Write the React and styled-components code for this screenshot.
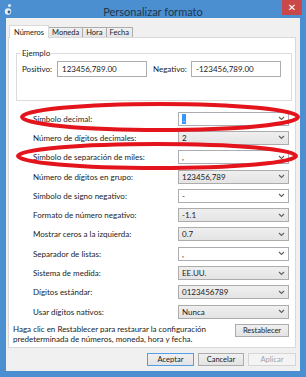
import React from 'react';
import styled, { createGlobalStyle } from 'styled-components';

const GlobalStyle = createGlobalStyle`
  body {
    margin: 0;
    font-family: Lato, "Noto Sans", sans-serif;
    font-size: 8px;
    color: #1b1b1b;
  }
`;

const Window = styled.div`
  position: relative;
  width: 306px;
  height: 377px;
  box-sizing: border-box;
  padding: 0 6px 6px;
  background: #4b8fd0;
  display: flex;
  flex-direction: column;
`;

const TitleBar = styled.div`
  height: 18px;
  margin: 0 -6px;
  padding: 0 4px;
  display: grid;
  grid-template-columns: 1fr auto 1fr;
  align-items: center;
`;

const Title = styled.div`
  font-size: 11px;
  color: #22364f;
  padding-top: 4px;
`;

const Close = styled.div`
  justify-self: end;
  align-self: start;
  width: 20px;
  height: 15px;
  background: #c9494a;
  color: #fff;
  font-size: 10px;
  font-family: "DejaVu Sans", sans-serif;
  display: flex;
  align-items: center;
  justify-content: center;
`;

const Body = styled.div`
  flex: 1;
  background: #f0f0f0;
  padding: 7px 4px 5px 2px;
  display: flex;
  flex-direction: column;
`;

const Tabs = styled.div`
  display: flex;
  align-items: flex-end;
  height: 12px;
  padding-left: 2px;
`;

const Tab = styled.div`
  position: relative;
  box-sizing: border-box;
  height: ${p => (p.$active ? 13 : 10)}px;
  margin-bottom: ${p => (p.$active ? -1 : 0)}px;
  padding: 0 ${p => (p.$active ? 4 : 3)}px;
  border: 1px solid ${p => (p.$active ? '#d9d9d9' : '#acacac')};
  border-bottom: none;
  margin-left: -1px;
  background: ${p => (p.$active ? '#fff' : 'linear-gradient(#f0f0f0, #e5e5e5)')};
  z-index: ${p => (p.$active ? 1 : 0)};
  display: flex;
  align-items: center;
  font-size: 7.5px;
`;

const Panel = styled.div`
  height: 311px;
  box-sizing: border-box;
  background: #fff;
  border: 1px solid #d9d9d9;
  padding-top: 10px;
  display: flex;
  flex-direction: column;
`;

const Group = styled.fieldset`
  margin: 0 3px 0 7px;
  padding: 0 4px 23px 5px;
  border: 1px solid #dcdcdc;
  min-width: 0;
`;

const Legend = styled.legend`
  padding: 0 1px;
  margin-left: -1px;
  line-height: 10px;
  font-size: 8px;
`;

const ExampleRow = styled.div`
  margin-top: 3px;
  display: grid;
  grid-template-columns: 35px 90px 44px 90px;
  column-gap: 0;
  align-items: center;
  & > :nth-child(3) {
    padding-left: 6px;
  }
`;

const TextBox = styled.div`
  box-sizing: border-box;
  height: 16px;
  border: 1px solid #abadb3;
  padding: 0 4px;
  display: flex;
  align-items: center;
`;

const Settings = styled.div`
  margin-top: 8px;
  padding: 0 6px 0 24px;
  display: grid;
  grid-template-columns: 1fr 111px;
  grid-auto-rows: 19.3px;
  align-items: center;
`;

const Select = styled.div`
  box-sizing: border-box;
  height: 14px;
  border: 1px solid ${p => (p.$editable ? '#abadb3' : '#acacac')};
  background: ${p => (p.$editable ? '#fff' : 'linear-gradient(#efefef, #e4e4e4)')};
  padding: 0 3px;
  display: flex;
  align-items: center;
  justify-content: space-between;
`;

const Chevron = styled.svg`
  width: 7px;
  height: 5px;
  flex: none;
`;

const Selected = styled.span`
  background: #3399ff;
  color: #fff;
  padding: 0 1px;
  line-height: 10px;
`;

const Footer = styled.div`
  margin-top: 3px;
  padding: 0 6px 0 4px;
  display: flex;
  justify-content: space-between;
  align-items: flex-start;
`;

const Hint = styled.div`
  line-height: 10px;
`;

const Button = styled.div`
  box-sizing: border-box;
  width: ${p => p.$w}px;
  height: 13px;
  border: 1px solid ${p => (p.$default ? '#4fa0e8' : p.$disabled ? '#d5d5d5' : '#acacac')};
  background: ${p => (p.$disabled ? '#f4f4f4' : 'linear-gradient(#f0f0f0, #e3e3e3)')};
  color: ${p => (p.$disabled ? '#a3a3a3' : '#1b1b1b')};
  display: flex;
  align-items: center;
  justify-content: center;
  font-size: 7.5px;
`;

const ButtonBar = styled.div`
  margin-top: 5px;
  display: flex;
  justify-content: flex-end;
  gap: 4px;
`;

const Marks = styled.svg`
  position: absolute;
  left: 0;
  top: 0;
  width: 306px;
  height: 377px;
  pointer-events: none;
`;

const settings = [
  { label: 'Símbolo decimal:', value: '.', editable: true, selected: true },
  { label: 'Número de dígitos decimales:', value: '2' },
  { label: 'Símbolo de separación de miles:', value: ',', editable: true },
  { label: 'Número de dígitos en grupo:', value: '123456,789' },
  { label: 'Símbolo de signo negativo:', value: '-', editable: true },
  { label: 'Formato de número negativo:', value: '-1.1' },
  { label: 'Mostrar ceros a la izquierda:', value: '0.7' },
  { label: 'Separador de listas:', value: ',', editable: true },
  { label: 'Sistema de medida:', value: 'EE.UU.' },
  { label: 'Dígitos estándar:', value: '0123456789' },
  { label: 'Usar dígitos nativos:', value: 'Nunca' },
];

const AppIcon = () => (
  <svg width="9" height="13" viewBox="0 0 9 13">
    <circle cx="5.5" cy="2.5" r="1.6" fill="#dfe9f4" />
    <circle cx="4" cy="8.5" r="3.2" fill="#e8eef5" />
    <circle cx="5" cy="9" r="1.4" fill="#2f5f9a" />
  </svg>
);

export default function App() {
  return (
    <>
      <GlobalStyle />
      <Window>
        <TitleBar>
          <AppIcon />
          <Title>Personalizar formato</Title>
          <Close>✕</Close>
        </TitleBar>
        <Body>
          <Tabs>
            <Tab $active>Números</Tab>
            <Tab>Moneda</Tab>
            <Tab>Hora</Tab>
            <Tab>Fecha</Tab>
          </Tabs>
          <Panel>
            <Group>
              <Legend>Ejemplo</Legend>
              <ExampleRow>
                <span>Positivo:</span>
                <TextBox>123456,789.00</TextBox>
                <span>Negativo:</span>
                <TextBox>-123456,789.00</TextBox>
              </ExampleRow>
            </Group>
            <Settings>
              {settings.map(s => (
                <React.Fragment key={s.label}>
                  <span>{s.label}</span>
                  <Select $editable={s.editable}>
                    {s.selected ? <Selected>{s.value}</Selected> : <span>{s.value}</span>}
                    <Chevron viewBox="0 0 7 5">
                      <path d="M1 1l2.5 2.5L6 1" fill="none" stroke="#606060" strokeWidth="1.1" />
                    </Chevron>
                  </Select>
                </React.Fragment>
              ))}
            </Settings>
            <Footer>
              <Hint>
                Haga clic en Restablecer para restaurar la configuración
                <br />
                predeterminada de números, moneda, hora y fecha.
              </Hint>
              <Button $w={54}>Restablecer</Button>
            </Footer>
          </Panel>
          <ButtonBar>
            <Button $w={47} $default>Aceptar</Button>
            <Button $w={46}>Cancelar</Button>
            <Button $w={48} $disabled>Aplicar</Button>
          </ButtonBar>
        </Body>
        <Marks viewBox="0 0 306 377">
          <ellipse cx="160" cy="117" rx="138" ry="13" fill="none" stroke="#e3141c" strokeWidth="4" />
          <ellipse cx="157" cy="156" rx="139" ry="12" fill="none" stroke="#e3141c" strokeWidth="4" />
        </Marks>
      </Window>
    </>
  );
}
